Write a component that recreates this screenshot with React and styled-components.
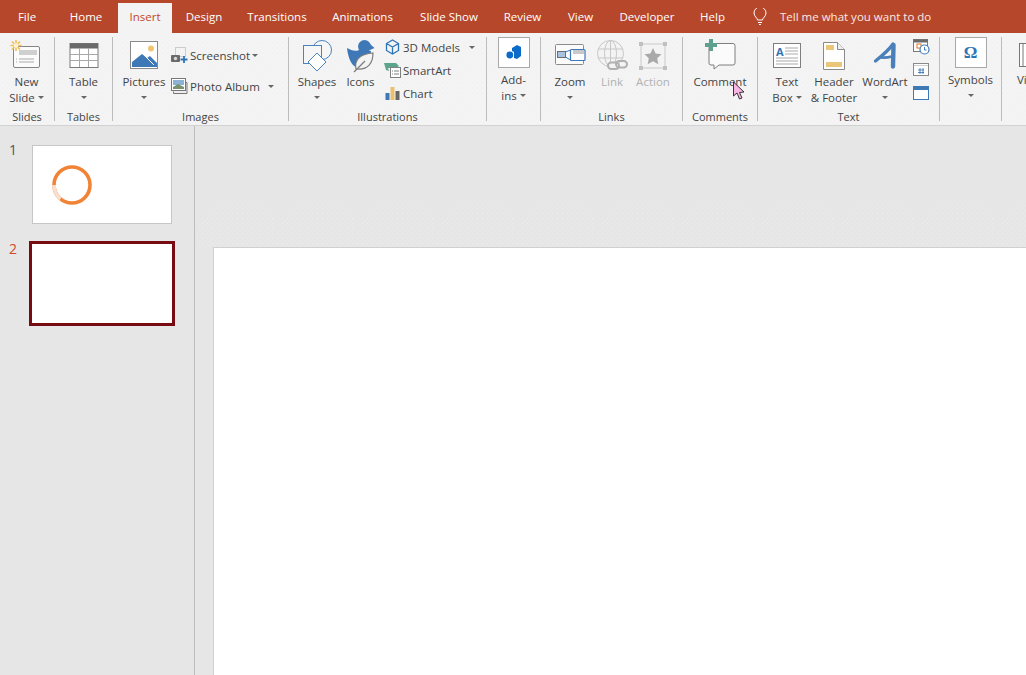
import React from 'react';
import styled, { createGlobalStyle } from 'styled-components';

const GlobalStyle = createGlobalStyle`
  html, body {
    margin: 0;
    padding: 0;
    height: 100%;
    overflow: hidden;
    background: #e6e6e6;
  }
  * {
    box-sizing: border-box;
  }
`;

const Page = styled.div`
  position: relative;
  width: 1026px;
  height: 675px;
  overflow: hidden;
  display: flex;
  flex-direction: column;
  font-family: 'Open Sans', 'Noto Sans', sans-serif;
  font-size: 11.5px;
  color: #444;
`;

const TabBar = styled.div`
  height: 33px;
  flex: none;
  display: flex;
  align-items: flex-end;
  background: #b7472a;
`;

const Tab = styled.div`
  width: ${(p) => p.$width}px;
  flex: none;
  height: 30px;
  display: flex;
  align-items: center;
  justify-content: center;
  padding-bottom: 3px;
  color: ${(p) => (p.$active ? '#c1492b' : '#fff')};
  background: ${(p) => (p.$active ? '#f3f3f3' : 'transparent')};
  white-space: nowrap;
`;

const TellMe = styled.div`
  display: flex;
  align-items: center;
  gap: 13px;
  height: 30px;
  padding: 0 0 3px 15px;
  color: #fbe9e4;
  white-space: nowrap;
`;

const Ribbon = styled.div`
  height: 93px;
  flex: none;
  display: flex;
  overflow: hidden;
  padding-top: 4px;
  background-color: #f3f3f3;
  background-image: radial-gradient(#f8f8f8 0.6px, transparent 0.8px),
    radial-gradient(#f8f8f8 0.6px, transparent 0.8px);
  background-size: 5px 5px;
  background-position: 0 0, 2.5px 2.5px;
  border-bottom: 1px solid #d2d2d2;
`;

const Group = styled.div`
  flex: none;
  width: ${(p) => p.$width}px;
  height: 84px;
  display: flex;
  flex-direction: column;
  border-right: 1px solid #bcbcbc;
`;

const GroupBody = styled.div`
  height: 72px;
  flex: none;
  display: flex;
  gap: ${(p) => p.$gap || 0}px;
  padding-left: ${(p) => p.$left || 0}px;
`;

const GroupLabel = styled.div`
  height: 16px;
  line-height: 16px;
  font-size: 11px;
  text-align: center;
  color: #444;
  white-space: nowrap;
`;

const BigButton = styled.div`
  flex: none;
  width: ${(p) => p.$width}px;
  display: flex;
  flex-direction: column;
  align-items: center;
  color: ${(p) => (p.$disabled ? '#b1b1b1' : '#444')};
`;

const IconSlot = styled.div`
  height: ${(p) => p.$height || 37}px;
  flex: none;
  display: flex;
  align-items: ${(p) => (p.$top ? 'flex-start' : 'center')};
  justify-content: center;
  align-self: stretch;
`;

const Line = styled.div`
  height: 15.5px;
  line-height: 15.5px;
  display: flex;
  align-items: center;
  justify-content: center;
  gap: 3px;
  white-space: nowrap;
`;

const Caret = styled.span`
  display: inline-block;
  width: 0;
  height: 0;
  border-left: 3.5px solid transparent;
  border-right: 3.5px solid transparent;
  border-top: 3.5px solid #666;
  margin-top: 1px;
`;

const SmallColumn = styled.div`
  flex: none;
  width: ${(p) => p.$width}px;
  padding-top: ${(p) => p.$top || 0}px;
  padding-left: ${(p) => p.$left || 0}px;
  display: flex;
  flex-direction: column;
  gap: ${(p) => p.$gap || 0}px;
`;

const SmallRow = styled.div`
  height: 16px;
  display: flex;
  align-items: center;
  gap: 2px;
  white-space: nowrap;
`;

const SmallIcon = styled.span`
  width: 17px;
  flex: none;
  display: flex;
  justify-content: center;
`;

const SmallCaret = styled(Caret)`
  margin-left: ${(p) => p.$left || 0}px;
`;

const IconBox = styled.div`
  width: 32px;
  height: 31px;
  display: flex;
  align-items: center;
  justify-content: center;
  background: #fff;
  border: 1px solid #a8a8a8;
`;

const SymbolIcon = styled.span`
  font-family: 'Liberation Serif', serif;
  font-size: 17px;
  font-weight: 700;
  line-height: 1;
  color: #2e75b6;
`;

const Workspace = styled.div`
  flex: 1;
  display: flex;
  min-height: 0;
  background-color: #e6e6e6;
`;

const SlidePane = styled.div`
  width: 195px;
  flex: none;
  padding-top: 19px;
  display: flex;
  flex-direction: column;
  gap: 17px;
  border-right: 1px solid #bdbdbd;
`;

const ThumbRow = styled.div`
  display: grid;
  grid-template-columns: 29px 146px;
  align-items: start;
`;

const ThumbNumber = styled.div`
  padding-left: 9px;
  font-size: 14px;
  line-height: 16px;
  margin-top: ${(p) => (p.$active ? 0 : -3)}px;
  color: ${(p) => (p.$active ? '#d24726' : '#555')};
`;

const Thumb = styled.div`
  justify-self: center;
  display: flex;
  align-items: center;
  background: #fff;
  width: ${(p) => (p.$active ? 146 : 140)}px;
  height: ${(p) => (p.$active ? 85 : 79)}px;
  padding-left: 19px;
  border: ${(p) => (p.$active ? '3px solid #780b12' : '1px solid #c6c6c6')};
`;

const Stage = styled.div`
  position: relative;
  flex: 1;
  padding: 121px 0 0 18px;
  display: flex;

  /* faint gif dither just above the slide, scalloped like the reference */
  &::before {
    content: '';
    position: absolute;
    left: 0;
    right: 0;
    top: 60px;
    height: 61px;
    background-image: radial-gradient(#eeeeee 0.6px, transparent 0.8px),
      radial-gradient(#eeeeee 0.6px, transparent 0.8px);
    background-size: 5px 5px;
    background-position: 0 0, 2.5px 2.5px;
    mask: radial-gradient(ellipse 45px 50px at 45px 62px, #000 98%, transparent 100%) 0 0 / 80px 100% repeat-x;
  }
`;

const Slide = styled.div`
  position: relative;
  flex: 1;
  background: #fff;
  border-top: 1px solid #d0d0d0;
  border-left: 1px solid #d0d0d0;
`;

const CursorMark = styled.svg`
  position: absolute;
  left: 732px;
  top: 81px;
`;

const Spinner = () => (
  <svg width="40" height="40" viewBox="0 0 40 40">
    <circle cx="20" cy="20" r="18" fill="none" stroke="#f08336" strokeWidth="3.6" />
    <path d="M2 20 A18 18 0 0 0 8.5 33.8" fill="none" stroke="#f8e0cf" strokeWidth="3.6" />
  </svg>
);

const NewSlideIcon = () => (
  <svg width="34" height="32" viewBox="0 0 34 32">
    <rect x="3.5" y="6.5" width="26" height="21" rx="1.5" fill="#fbfbfb" stroke="#858585" />
    <rect x="9" y="10" width="18" height="5" fill="#cfcfcf" />
    <path d="M9 19h15M9 22h15M6 19h1M6 22h1" stroke="#a9a9a9" />
    <g stroke="#f2bd5a" strokeWidth="1.6">
      <path d="M6 0v11M0.5 5.5h11M2 1.5l8 8M10 1.5l-8 8" />
    </g>
    <circle cx="6" cy="5.5" r="2.4" fill="#fff2cf" />
  </svg>
);

const TableIcon = () => (
  <svg width="30" height="26" viewBox="0 0 30 26">
    <rect x="1" y="0.5" width="28" height="24" fill="#fff" stroke="#7a7a7a" />
    <rect x="1" y="0.5" width="28" height="5" fill="#6a6a6a" />
    <path d="M1 11.500h28M1 17.500h28M10.500 5v19M19.500 5v19" stroke="#a8a8a8" />
  </svg>
);

const PicturesIcon = () => (
  <svg width="29" height="29" viewBox="0 0 29 29">
    <rect x="0.5" y="0.5" width="27" height="27" fill="#fff" stroke="#8a8a8a" />
    <circle cx="21" cy="7.500" r="3" fill="#efc56f" />
    <path d="M2 26v-5l10-8 5 4 3-2 7 7v4z" fill="#3f78b6" />
    <path d="M14 14l10 10" stroke="#fff" strokeWidth="1" />
  </svg>
);

const ScreenshotIcon = () => (
  <svg width="17" height="16" viewBox="0 0 17 16">
    <rect x="4.5" y="0.5" width="10" height="9" fill="none" stroke="#a5a5a5" strokeDasharray="1 1" />
    <rect x="0" y="8" width="9" height="7" rx="1" fill="#6a6a6a" />
    <circle cx="4.5" cy="11.500" r="1.700" fill="#d8d8d8" />
    <path d="M13 9v7M9.500 12.500h7" stroke="#2f75b5" strokeWidth="1.800" />
  </svg>
);

const PhotoAlbumIcon = () => (
  <svg width="17" height="16" viewBox="0 0 17 16">
    <path d="M2.500 13.500v2h13.500v-11h-1.500" fill="#eee" stroke="#777" />
    <rect x="0.5" y="0.5" width="14" height="12" fill="#fff" stroke="#777" />
    <rect x="2" y="2" width="11" height="5" fill="#8db2d6" />
    <path d="M2 9l5-3 6 3v2H2z" fill="#78936e" />
  </svg>
);

const ShapesIcon = () => (
  <svg width="32" height="32" viewBox="0 0 32 32">
    <circle cx="21" cy="10" r="9.500" fill="#f6f6f6" stroke="#4a83bd" />
    <rect x="2.500" y="5.500" width="18" height="18" fill="#f6f6f6" stroke="#4a83bd" />
    <path d="M16 13l9 9-9 9-9-9z" fill="#fff" stroke="#4a83bd" />
  </svg>
);

const IconsIcon = () => (
  <svg width="30" height="34" viewBox="0 0 30 34">
    <circle cx="18.500" cy="7.500" r="6.500" fill="#3f78b6" />
    <path d="M24 5l4.500 4-4.500 2z" fill="#3f78b6" />
    <path d="M1 9c4 2 8 4 12 2l12 1c0 6-6 12-15 16-4-1-8-9-9-19z" fill="#3f78b6" />
    <path d="M10 30C8 20 15 15 27 14c0 10-5 17-16 16z" fill="#f3f3f3" stroke="#7b7b7b" strokeWidth="1.200" />
    <path d="M8 33l11-11" stroke="#7b7b7b" strokeWidth="1.200" />
  </svg>
);

const ModelsIcon = () => (
  <svg width="15" height="16" viewBox="0 0 15 16">
    <path d="M7.500 1l6 3.500v7l-6 3.500-6-3.500v-7zM1.500 4.500l6 3.500 6-3.500M7.500 8v7" fill="none" stroke="#2e75b6" strokeWidth="1.300" />
  </svg>
);

const SmartArtIcon = () => (
  <svg width="17" height="16" viewBox="0 0 17 16">
    <path d="M0 1h12l3 3-3 2H4l1 3-3-1z" fill="#5ba58d" />
    <rect x="6.500" y="5.500" width="10" height="10" fill="#fff" stroke="#808080" />
    <path d="M8 9h1M10 9h5M8 12h1M10 12h5" stroke="#808080" />
  </svg>
);

const ChartIcon = () => (
  <svg width="15" height="15" viewBox="0 0 15 15">
    <rect x="0.5" y="7" width="4" height="7" fill="#3f78b6" />
    <rect x="5.500" y="1" width="4" height="13" fill="#eabf6f" />
    <rect x="10.500" y="5" width="4" height="9" fill="#666" />
  </svg>
);

const AddInsIcon = () => (
  <svg width="16" height="17" viewBox="0 0 16 17">
    <path d="M6 4l5-3 4 2v9l-4 3-3-1V8L6 7z" fill="#0a6cc8" />
    <circle cx="3.800" cy="11" r="3.400" fill="#0a6cc8" />
  </svg>
);

const ZoomIcon = () => (
  <svg width="31" height="23" viewBox="0 0 31 23">
    <rect x="0.5" y="0.5" width="28" height="20" rx="1" fill="#fbfbfb" stroke="#8a8a8a" />
    <rect x="2.500" y="7.500" width="8" height="6" fill="#a9c4e0" stroke="#6d6d6d" />
    <path d="M10.500 8l5-2M10.500 13l5 3" stroke="#3f78b6" />
    <rect x="15.500" y="5.500" width="14.500" height="11" rx="1" fill="#fff" stroke="#3f78b6" strokeWidth="1.200" />
    <rect x="18" y="6" width="11" height="4" fill="#c9c9c9" />
  </svg>
);

const LinkIcon = () => (
  <svg width="32" height="31" viewBox="0 0 32 31">
    <g fill="none" stroke="#c7c7c7">
      <circle cx="14.500" cy="13.500" r="13" />
      <ellipse cx="14.500" cy="13.500" rx="6" ry="13" />
      <path d="M14.500 0.5v26M2 9h25M2 18h25" />
    </g>
    <rect x="12" y="22.500" width="11" height="6.500" rx="3.200" fill="#f3f3f3" stroke="#b0b0b0" strokeWidth="2" />
    <rect x="20" y="21" width="11" height="6.500" rx="3.200" fill="none" stroke="#b0b0b0" strokeWidth="2" />
  </svg>
);

const ActionIcon = () => (
  <svg width="28" height="28" viewBox="0 0 28 28">
    <rect x="2" y="2" width="24" height="24" fill="none" stroke="#c9c9c9" />
    <path d="M0 0h4v4H0zM24 0h4v4h-4zM0 24h4v4H0zM24 24h4v4h-4z" fill="#c0c0c0" />
    <path d="M14 6l2.600 5.400 5.900.8-4.300 4.100 1.100 5.900-5.300-2.900-5.300 2.900 1.100-5.900-4.300-4.100 5.900-.8z" fill="#a9a9a9" />
  </svg>
);

const CommentIcon = () => (
  <svg width="31" height="33" viewBox="0 0 31 33">
    <path d="M4 4.500h24a2 2 0 0 1 2 2V24a2 2 0 0 1-2 2H14l-5 4v-4H6a2 2 0 0 1-2-2V4.500z" fill="#fbfbfb" stroke="#7f7f7f" />
    <path d="M6 0v12M0 6h12" stroke="#5f9f8e" strokeWidth="4" />
  </svg>
);

const TextBoxIcon = () => (
  <svg width="28" height="26" viewBox="0 0 28 26">
    <rect x="0.5" y="0.5" width="27" height="24" fill="#fff" stroke="#7f7f7f" />
    <text x="3" y="13" fontSize="11" fontWeight="700" fill="#2e75b6" fontFamily="'Open Sans', sans-serif">A</text>
    <path d="M12 5h13M12 8h13M12 11h13M3 15h22M3 18h22M3 21h22" stroke="#a9a9a9" />
  </svg>
);

const HeaderIcon = () => (
  <svg width="22" height="28" viewBox="0 0 22 28">
    <path d="M0.5 0.5h14l7 7v20h-21z" fill="#fff" stroke="#8a8a8a" />
    <path d="M14.500 0.5v7h7" fill="#efefef" stroke="#8a8a8a" />
    <rect x="3" y="3" width="8" height="5" fill="#ecc678" />
    <rect x="3" y="20" width="16" height="5" fill="#ecc678" />
  </svg>
);

const WordArtIcon = () => (
  <svg width="24" height="28" viewBox="0 0 24 28">
    <g fill="none" stroke="#4a80ba" strokeLinecap="round">
      <path d="M20.500 3L20 24.500" strokeWidth="4.400" />
      <path d="M20 2C16 8 10 13 2.500 19" strokeWidth="3.200" />
      <path d="M8 15.500c4 .5 7 0 11-1" strokeWidth="2.600" />
    </g>
  </svg>
);

const DateIcon = () => (
  <svg width="17" height="16" viewBox="0 0 17 16">
    <rect x="0.5" y="0.5" width="14" height="12" fill="#fff" stroke="#7a7a7a" />
    <rect x="0.5" y="0.5" width="14" height="3" fill="#6a6a6a" />
    <rect x="4" y="5" width="4" height="4" fill="none" stroke="#d9782d" />
    <circle cx="11.500" cy="10.500" r="4.500" fill="#fff" stroke="#3f78b6" strokeWidth="1.200" />
    <path d="M11.500 8v3h2" stroke="#3f78b6" fill="none" />
  </svg>
);

const NumberIcon = () => (
  <svg width="16" height="14" viewBox="0 0 16 14">
    <rect x="0.5" y="0.5" width="15" height="12" fill="#fff" stroke="#8a8a8a" />
    <path d="M1 2.500h14" stroke="#d0d0d0" />
    <path d="M7 5v6M10 5v6M5 7h6M5 9.500h6" stroke="#3f78b6" strokeWidth="0.9" />
  </svg>
);

const ObjectIcon = () => (
  <svg width="16" height="14" viewBox="0 0 16 14">
    <rect x="0.5" y="0.5" width="15" height="13" fill="#fff" stroke="#3f78b6" />
    <rect x="0.5" y="0.5" width="15" height="3.500" fill="#3f78b6" />
  </svg>
);

const VideoIcon = () => (
  <svg width="26" height="24" viewBox="0 0 26 24">
    <rect x="0.5" y="0.5" width="25" height="23" fill="#fff" stroke="#777" />
    <path d="M4 1v22" stroke="#777" />
  </svg>
);

const App = () => (
  <Page>
    <GlobalStyle />
    <TabBar>
      <Tab $width={54}>File</Tab>
      <Tab $width={64}>Home</Tab>
      <Tab $width={54} $active>Insert</Tab>
      <Tab $width={64}>Design</Tab>
      <Tab $width={82}>Transitions</Tab>
      <Tab $width={89}>Animations</Tab>
      <Tab $width={84}>Slide Show</Tab>
      <Tab $width={63}>Review</Tab>
      <Tab $width={53}>View</Tab>
      <Tab $width={80}>Developer</Tab>
      <Tab $width={51}>Help</Tab>
      <TellMe>
        <svg width="14" height="17" viewBox="0 0 14 17">
          <path d="M4.500 12c0-2-3.500-3.500-3.500-7a6 6 0 0 1 12 0c0 3.500-3.500 5-3.500 7zM5 14.500h4M6 16.500h2" fill="none" stroke="#fff" />
        </svg>
        Tell me what you want to do
      </TellMe>
    </TabBar>

    <Ribbon>
      <Group $width={55}>
        <GroupBody>
          <BigButton $width={53}>
            <IconSlot><NewSlideIcon /></IconSlot>
            <Line>New</Line>
            <Line>Slide <Caret /></Line>
          </BigButton>
        </GroupBody>
        <GroupLabel>Slides</GroupLabel>
      </Group>

      <Group $width={58}>
        <GroupBody>
          <BigButton $width={57}>
            <IconSlot><TableIcon /></IconSlot>
            <Line>Table</Line>
            <Line><Caret /></Line>
          </BigButton>
        </GroupBody>
        <GroupLabel>Tables</GroupLabel>
      </Group>

      <Group $width={176}>
        <GroupBody $left={8} $gap={4}>
          <BigButton $width={46}>
            <IconSlot><PicturesIcon /></IconSlot>
            <Line>Pictures</Line>
            <Line><Caret /></Line>
          </BigButton>
          <SmallColumn $width={112} $top={10} $gap={15}>
            <SmallRow>
              <SmallIcon><ScreenshotIcon /></SmallIcon>
              Screenshot
              <Caret />
            </SmallRow>
            <SmallRow>
              <SmallIcon><PhotoAlbumIcon /></SmallIcon>
              Photo Album
              <SmallCaret $left={6} />
            </SmallRow>
          </SmallColumn>
        </GroupBody>
        <GroupLabel>Images</GroupLabel>
      </Group>

      <Group $width={198}>
        <GroupBody $left={8} $gap={5}>
          <BigButton $width={40}>
            <IconSlot><ShapesIcon /></IconSlot>
            <Line>Shapes</Line>
            <Line><Caret /></Line>
          </BigButton>
          <BigButton $width={37}>
            <IconSlot><IconsIcon /></IconSlot>
            <Line>Icons</Line>
          </BigButton>
          <SmallColumn $width={100} $top={2} $gap={7}>
            <SmallRow>
              <SmallIcon><ModelsIcon /></SmallIcon>
              3D Models
              <SmallCaret $left={7} />
            </SmallRow>
            <SmallRow>
              <SmallIcon><SmartArtIcon /></SmallIcon>
              SmartArt
            </SmallRow>
            <SmallRow>
              <SmallIcon><ChartIcon /></SmallIcon>
              Chart
            </SmallRow>
          </SmallColumn>
        </GroupBody>
        <GroupLabel>Illustrations</GroupLabel>
      </Group>

      <Group $width={54}>
        <GroupBody>
          <BigButton $width={53}>
            <IconSlot $height={35} $top>
              <IconBox><AddInsIcon /></IconBox>
            </IconSlot>
            <Line>Add-</Line>
            <Line>ins <Caret /></Line>
          </BigButton>
        </GroupBody>
        <GroupLabel />
      </Group>

      <Group $width={142}>
        <GroupBody $left={6}>
          <BigButton $width={46}>
            <IconSlot><ZoomIcon /></IconSlot>
            <Line>Zoom</Line>
            <Line><Caret /></Line>
          </BigButton>
          <BigButton $width={38} $disabled>
            <IconSlot><LinkIcon /></IconSlot>
            <Line>Link</Line>
          </BigButton>
          <BigButton $width={44} $disabled>
            <IconSlot><ActionIcon /></IconSlot>
            <Line>Action</Line>
          </BigButton>
        </GroupBody>
        <GroupLabel>Links</GroupLabel>
      </Group>

      <Group $width={75}>
        <GroupBody>
          <BigButton $width={74}>
            <IconSlot><CommentIcon /></IconSlot>
            <Line>Comment</Line>
          </BigButton>
        </GroupBody>
        <GroupLabel>Comments</GroupLabel>
      </Group>

      <Group $width={182}>
        <GroupBody $left={9}>
          <BigButton $width={40}>
            <IconSlot><TextBoxIcon /></IconSlot>
            <Line>Text</Line>
            <Line>Box <Caret /></Line>
          </BigButton>
          <BigButton $width={54}>
            <IconSlot><HeaderIcon /></IconSlot>
            <Line>Header</Line>
            <Line>&amp; Footer</Line>
          </BigButton>
          <BigButton $width={48}>
            <IconSlot><WordArtIcon /></IconSlot>
            <Line>WordArt</Line>
            <Line><Caret /></Line>
          </BigButton>
          <SmallColumn $width={24} $top={2} $gap={7} $left={4}>
            <SmallRow><DateIcon /></SmallRow>
            <SmallRow><NumberIcon /></SmallRow>
            <SmallRow><ObjectIcon /></SmallRow>
          </SmallColumn>
        </GroupBody>
        <GroupLabel>Text</GroupLabel>
      </Group>

      <Group $width={62}>
        <GroupBody>
          <BigButton $width={61}>
            <IconSlot $height={35} $top>
              <IconBox><SymbolIcon>Ω</SymbolIcon></IconBox>
            </IconSlot>
            <Line>Symbols</Line>
            <Line><Caret /></Line>
          </BigButton>
        </GroupBody>
        <GroupLabel />
      </Group>

      <Group $width={90}>
        <GroupBody>
          <BigButton $width={60}>
            <IconSlot $height={35}><VideoIcon /></IconSlot>
            <Line>Video</Line>
          </BigButton>
        </GroupBody>
      </Group>
    </Ribbon>

    <Workspace>
      <SlidePane>
        <ThumbRow>
          <ThumbNumber>1</ThumbNumber>
          <Thumb><Spinner /></Thumb>
        </ThumbRow>
        <ThumbRow>
          <ThumbNumber $active>2</ThumbNumber>
          <Thumb $active />
        </ThumbRow>
      </SlidePane>
      <Stage>
        <Slide />
      </Stage>
    </Workspace>

    <CursorMark width="16" height="20" viewBox="0 0 16 20">
      <path d="M1.500 1v14l3.500-3 2.500 6 2.500-1-2.500-5.500 4.500-.5z" fill="#f7b4e4" stroke="#222" strokeWidth="0.9" />
    </CursorMark>
  </Page>
);

export default App;
